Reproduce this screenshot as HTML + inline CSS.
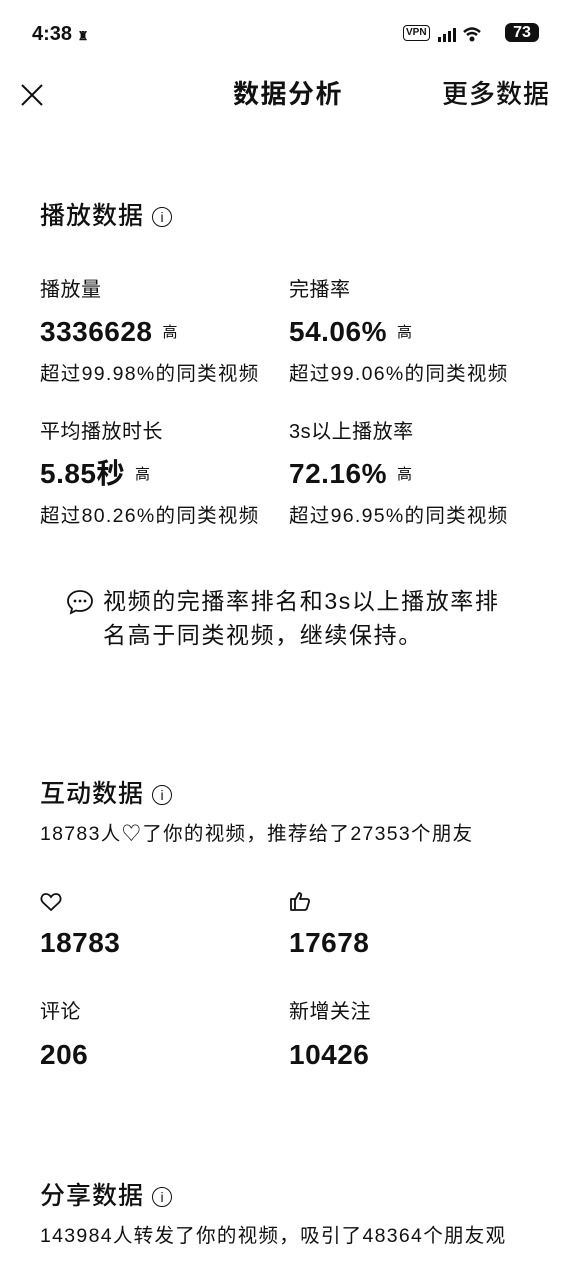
<!DOCTYPE html><html><head><meta charset="utf-8"><style>
body{margin:0;width:576px;height:1280px;background:#fff;font-family:"Liberation Sans","Noto Sans CJK SC",sans-serif;color:#111;position:relative;overflow:hidden}
.a{position:absolute;white-space:nowrap;line-height:1}
.t{font-size:25px;font-weight:500;letter-spacing:1px}
.l{font-size:20px;letter-spacing:0.5px}
.n{font-size:28px;font-weight:bold;letter-spacing:0.5px}
.n small{font-size:15px;font-weight:normal;margin-left:10px;vertical-align:4px}
.s{font-size:19.5px;letter-spacing:1.3px}
.i{display:inline-block;width:18px;height:18px;border:1.8px solid #111;border-radius:50%;font-size:14px;text-align:center;line-height:18px;vertical-align:2px;margin-left:8px;font-weight:normal;letter-spacing:0}
</style></head><body>
<div class="a" style="left:32px;top:24px;font-size:20px;font-weight:bold">4:38 <span style="font-size:12px">♜</span></div>
<div class="a" style="left:403px;top:25px;font-size:10px;font-weight:bold;border:1.5px solid #111;border-radius:4px;padding:2px 2px">VPN</div>
<svg class="a" style="left:437px;top:26px" width="60" height="18"><rect x="1" y="11" width="3" height="5" fill="#111"/><rect x="6" y="8" width="3" height="8" fill="#111"/><rect x="11" y="5" width="3" height="11" fill="#111"/><rect x="16" y="2" width="3" height="14" fill="#111"/><path d="M27 6 Q35 -1 43 6 M30 9 Q35 5 40 9" stroke="#111" stroke-width="2.5" fill="none"/><circle cx="35" cy="13" r="2.5" fill="#111"/></svg>
<div class="a" style="left:505px;top:23px;width:34px;height:19px;background:#111;color:#fff;border-radius:6px;font-size:16px;font-weight:bold;text-align:center;line-height:19px">73</div>
<svg class="a" style="left:20px;top:83px" width="24" height="24"><path d="M2 2L22 22M22 2L2 22" stroke="#111" stroke-width="2"/></svg>
<div class="a" style="left:233px;top:81px;font-size:26px;font-weight:bold;letter-spacing:1.5px">数据分析</div>
<div class="a" style="left:442px;top:81px;font-size:26px;font-weight:500;letter-spacing:1px">更多数据</div>

<div class="a t" style="left:40px;top:204px">播放数据<span class="i">i</span></div>
<div class="a l" style="left:40px;top:280px">播放量</div>
<div class="a l" style="left:289px;top:280px">完播率</div>
<div class="a n" style="left:40px;top:318px">3336628<small>高</small></div>
<div class="a n" style="left:289px;top:318px">54.06%<small>高</small></div>
<div class="a s" style="left:40px;top:365px">超过99.98%的同类视频</div>
<div class="a s" style="left:289px;top:365px">超过99.06%的同类视频</div>
<div class="a l" style="left:40px;top:422px">平均播放时长</div>
<div class="a l" style="left:289px;top:422px">3s以上播放率</div>
<div class="a n" style="left:40px;top:460px">5.85秒<small>高</small></div>
<div class="a n" style="left:289px;top:460px">72.16%<small>高</small></div>
<div class="a s" style="left:40px;top:507px">超过80.26%的同类视频</div>
<div class="a s" style="left:289px;top:507px">超过96.95%的同类视频</div>

<svg class="a" style="left:66px;top:589px" width="28" height="26"><path d="M14 2C7 2 2 6.5 2 12c0 3 1.5 5.5 4 7.5L5 24l5-2.5c1.3.4 2.6.5 4 .5 7 0 12-4.5 12-10S21 2 14 2z" stroke="#111" stroke-width="1.8" fill="none"/><circle cx="9" cy="12" r="1.4" fill="#111"/><circle cx="14" cy="12" r="1.4" fill="#111"/><circle cx="19" cy="12" r="1.4" fill="#111"/></svg>
<div class="a" style="left:103px;top:590px;font-size:23px;letter-spacing:1.6px">视频的完播率排名和3s以上播放率排</div>
<div class="a" style="left:103px;top:624px;font-size:23px;letter-spacing:1.6px">名高于同类视频，继续保持。</div>

<div class="a t" style="left:40px;top:782px">互动数据<span class="i">i</span></div>
<div class="a s" style="left:40px;top:825px">18783人♡了你的视频，推荐给了27353个朋友</div>
<svg class="a" style="left:40px;top:892px" width="22" height="20"><path d="M11 18L3 10.5C0 7.5 1.5 2 6 2c2.3 0 4 1.5 5 3 1-1.5 2.7-3 5-3 4.5 0 6 5.5 3 8.5z" stroke="#111" stroke-width="1.8" fill="none"/></svg>
<svg class="a" style="left:289px;top:890px" width="22" height="22"><path d="M2 9h4v11H2zM6 10l4-7c2 0 2.5 1.5 2 3l-1 3h7c1.5 0 2.5 1.2 2 2.7l-2 6.5c-.4 1.2-1.3 1.8-2.5 1.8H6" stroke="#111" stroke-width="1.8" fill="none" stroke-linejoin="round"/></svg>
<div class="a n" style="left:40px;top:929px">18783</div>
<div class="a n" style="left:289px;top:929px">17678</div>
<div class="a l" style="left:40px;top:1002px">评论</div>
<div class="a l" style="left:289px;top:1002px">新增关注</div>
<div class="a n" style="left:40px;top:1041px">206</div>
<div class="a n" style="left:289px;top:1041px">10426</div>

<div class="a t" style="left:40px;top:1184px">分享数据<span class="i">i</span></div>
<div class="a s" style="left:40px;top:1227px">143984人转发了你的视频，吸引了48364个朋友观</div>
</body></html>
